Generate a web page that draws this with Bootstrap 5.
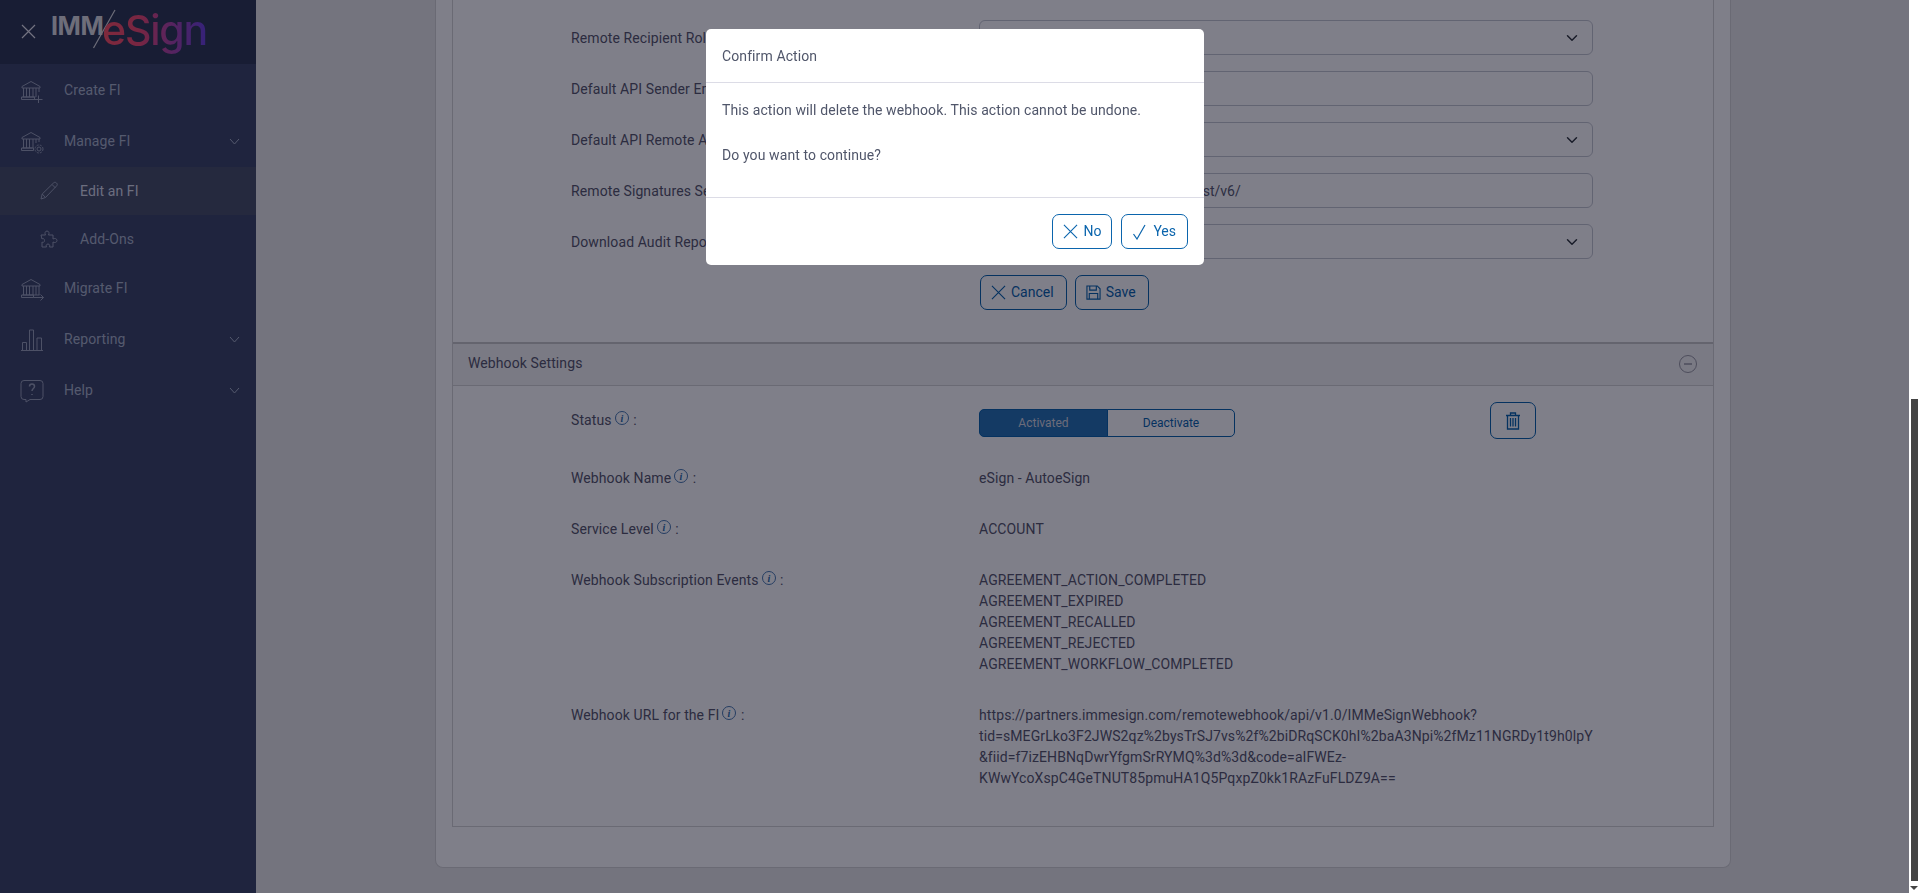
<!DOCTYPE html>
<html lang="en">
<head>
    <meta charset="UTF-8">
    <meta name="viewport" content="width=device-width, initial-scale=1.0">
    <title>Edit an FI - IMM eSign</title>
    <link href="https://cdn.jsdelivr.net/npm/bootstrap@5.3.0/dist/css/bootstrap.min.css" rel="stylesheet">
    <style>
        html, body { height: 100%; overflow: hidden; }
        body { font-family: Roboto, "Liberation Sans", sans-serif; font-size: 14px; letter-spacing: .1px; color: #5a5c70; background: #e8e8e8; }

        .app-shell { height: 893px; }
        .side-panel { width: 256px; flex: 0 0 256px; background: #3e4868; color: #aab4c8; }
        .side-top { height: 64px; background: #303a54; padding-left: 21px; }
        .side-close { width: 15px; height: 15px; margin-right: 15px; margin-top: -2px; }
        .brand-box { position: relative; width: 170px; height: 64px; }
        .brand-imm { position: absolute; left: 0; top: 10px; font: 700 25px/32px Inter, sans-serif; color: #dcdce0; letter-spacing: -.4px; }
        .brand-esign { position: absolute; left: 51px; top: 3px; font: 500 41px/54px Inter, sans-serif; letter-spacing: -1.2px;
            background: linear-gradient(90deg, #ff5464 0%, #f04c70 35%, #b048a8 65%, #6a44e0 100%);
            -webkit-background-clip: text; background-clip: text; color: transparent; }
        .brand-slash { position: absolute; left: 41px; top: 9px; }
        .side-link { display: flex; align-items: center; color: #aab4c8; text-decoration: none; }
        .side-link svg.ico { fill: none; stroke: #9aa2b8; stroke-width: 1; flex: none; }
        .side-main { height: 51px; padding-left: 20px; }
        .side-main .ico { width: 24px; height: 24px; margin-right: 20px; }
        .side-sub { height: 48px; padding-left: 39px; }
        .side-sub .ico { width: 20px; height: 20px; margin-right: 21px; }
        .side-sub.is-active { background: #4a5268; color: #d8dce8; }
        .side-chev { margin-left: auto; margin-right: 16px; width: 11px; height: 7px; fill: none; stroke: currentColor; stroke-width: 1; }
        .first-link { margin-top: 1px; }

        .work-area { min-width: 0; padding: 0 0 0 179px; }
        .outer-card { width: 1296px; height: 868px; background: #fff; border: 1px solid #d4d4d4; border-top: 0; border-radius: 0 0 8px 8px; padding: 0 16px; }
        .inner-panel { height: 827px; border: 1px solid #d4d4d4; border-top: 0; background: #fff; }
        .form-area { height: 342px; padding: 20px 0 0 118px; }
        .field-row { height: 51px; }
        .field-label { width: 408px; flex: none; line-height: 21px; padding-top: 8px; color: #58586c; }
        .field-box { width: 614px; }
        .field-box .form-control, .field-box .form-select { height: 35px; font-size: 14px; color: #5a5c70; border-color: #c4c8d0; border-radius: 6px; padding-top: 0; padding-bottom: 0; }
        .field-box .form-control { padding-left: 16px; }
        .blue-btn { --bs-btn-color: #0b65ad; --bs-btn-border-color: #0b65ad; --bs-btn-hover-bg: #0b65ad; --bs-btn-hover-border-color: #0b65ad;
            height: 35px; font-size: 14px; border-radius: 7px; padding: 0 12px 0 10px; display: inline-flex; align-items: center; gap: 5px; }
        .blue-btn svg { fill: none; stroke: currentColor; flex: none; }
        .btn-pair { margin-left: 409px; }
        .hook-head { height: 44px; border-top: 2px solid #c8c8c8; border-bottom: 1px solid #d4d4d4; background: #f4f4f4; padding: 0 16px 2px 15px; color: #58586c; }
        .hook-minus { width: 18px; height: 18px; fill: none; stroke: #9a9aa4; }
        .hook-body { padding: 0 0 0 118px; }
        .hook-row { display: flex; line-height: 21px; height: 51px; }
        .hook-row .hook-label { width: 408px; flex: none; color: #58586c; }
        .hook-row .hook-value { color: #58586c; }
        .hook-status { padding-top: 24px; height: 82px; }
        .hook-status .hook-value { margin-top: -1px; }
        .hook-events { height: 135px; }
        .info-dot { width: 14px; height: 14px; display: inline-block; vertical-align: 0; margin: 0 1px 0 3px; }
        .status-toggle { width: 256px; height: 28px; }
        .status-toggle .btn { font-size: 12px; line-height: 26px; padding: 0; border-color: #0b65ad; color: #0b65ad; border-radius: 5px; }
        .status-toggle .btn.toggle-on { background: #2874b4; color: #d8d8e0; width: 129px; flex: none; }
        .trash-btn { width: 46px; height: 37px; margin-left: 255px; margin-top: -7px; justify-content: center; padding: 0; }

        .fake-scroll { position: fixed; z-index: 1060; top: 0; right: 0; bottom: 0; width: 11px; background: #fff; }
        .fake-thumb { position: absolute; top: 399px; bottom: 12px; left: 2px; width: 7px; background: #444; }
        .fake-arrow { position: absolute; left: 1px; bottom: 3px; width: 0; height: 0; border: 4px solid transparent; border-top: 4px solid #444; border-bottom: 0; }

        .modal-backdrop.dim-layer { background: rgb(0, 0, 20); opacity: .5; }
        .confirm-dialog { max-width: 498px; width: 498px; margin: 29px 0 0 706px; }
        .confirm-dialog .modal-content { border: 0; border-radius: 5px; color: #50566a; height: 236px; }
        .confirm-dialog .modal-header { height: 54px; padding: 2px 16px 0; border-bottom: 1px solid #dcdce6; font-size: 14px; }
        .confirm-dialog .modal-body { height: 114px; flex: none; padding: 17px 16px 0; line-height: 21px; }
        .confirm-dialog .modal-body p { margin-bottom: 24px; }
        .confirm-dialog .modal-footer { height: 68px; padding: 0 16px 0 0; border-top: 1px solid #dcdce6; gap: 9px; align-items: center; }
        .confirm-dialog .modal-footer > * { margin: 0; }
        .confirm-dialog .modal-footer .btn-no { padding-right: 10px; }
        .confirm-dialog .modal-footer .btn-yes { padding: 0 11px; gap: 7px; }
    </style>
</head>
<body>
    <div class="app-shell d-flex">
        <aside class="side-panel">
            <div class="side-top d-flex align-items-center">
                <svg class="side-close" viewBox="0 0 15 15" fill="none" stroke="#e6e6ee" stroke-width="1.2"><path d="M1 1l13 13M14 1L1 14"/></svg>
                <div class="brand-box">
                    <span class="brand-imm">IMM</span>
                    <svg class="brand-slash" width="24" height="40" viewBox="0 0 24 40" fill="none" stroke="#dcdce0" stroke-width="1.2"><path d="M1.5 39L23 1"/></svg>
                    <span class="brand-esign">eSign</span>
                </div>
            </div>

            <a class="side-link side-main first-link" href="#">
                <svg class="ico" viewBox="0 0 24 24"><path d="M2 7.500L11 2.500l9 5v1.500H2zM3.500 9v9M6.500 9v9M9.500 9v9M13 9v9M16 9v9M19 9v4M2.500 18h13M1.500 20.500h13v-2.500h-13zM14 20.500h8.500M18.500 16.500v8"/></svg>
                <span>Create FI</span>
            </a>
            <a class="side-link side-main" href="#">
                <svg class="ico" viewBox="0 0 24 24"><path d="M2 7.500L11 2.500l9 5v1.500H2zM3.500 9v9M6.500 9v9M9.500 9v9M13 9v9M16 9v4M19 9v3M2.500 18h10M1.500 20.500h12v-2.500h-12z"/><circle cx="19" cy="19" r="2"/><circle cx="19" cy="19" r="4" stroke-dasharray="2 1.200"/></svg>
                <span>Manage FI</span>
                <svg class="side-chev" viewBox="0 0 11 7"><path d="M1 1l4.500 5L10 1"/></svg>
            </a>
            <a class="side-link side-sub is-active" href="#">
                <svg class="ico" viewBox="0 0 20 20"><path d="M2 18l1.200-5L14.500 2c1-1 2-1 3 0s1 2 0 3L6.500 16.500zM3.200 13l3.300 3.500M13 3.500l3.500 3.500"/></svg>
                <span>Edit an FI</span>
            </a>
            <a class="side-link side-sub" href="#">
                <svg class="ico" viewBox="0 0 20 20"><path d="M2 6h4.500c-1-1.500-.5-4 1.500-4s2.500 2.500 1.500 4H14v4c1.500-1 4-.5 4 1.500S15.500 14 14 13v5h-3.500c.8-1.500 0-3-1.500-3s-2.500 1.500-1.500 3H3v-5c1 .8 2.500.3 2.500-1.500S4 9 3 10z"/></svg>
                <span>Add-Ons</span>
            </a>
            <a class="side-link side-main" href="#">
                <svg class="ico" viewBox="0 0 24 24"><path d="M2 7.500L11 2.500l9 5v1.500H2zM3.500 9v9M6.500 9v9M9.500 9v9M13 9v9M16 9v9M19 9v9M2.500 18h17M1.500 20.500h12v-2.500h-12zM13.500 20.500h10M20.500 17.500l3 3-3 3"/></svg>
                <span>Migrate FI</span>
            </a>
            <a class="side-link side-main" href="#">
                <svg class="ico" viewBox="0 0 24 24"><path d="M1 22.500h22M2.500 22.500v-8h4v8M9.500 22.500V2h4v20.500M17 22.500V10h4.500v12.500"/></svg>
                <span>Reporting</span>
                <svg class="side-chev" viewBox="0 0 11 7"><path d="M1 1l4.500 5L10 1"/></svg>
            </a>
            <a class="side-link side-main" href="#">
                <svg class="ico" viewBox="0 0 24 24"><path d="M4 1.500h16a3 3 0 0 1 3 3v13a3 3 0 0 1-3 3H10l-4 2.500v-2.500H4a3 3 0 0 1-3-3v-13a3 3 0 0 1 3-3z"/><path d="M9.500 7.500c0-3.200 5-3.200 5 0 0 2-2.500 2-2.500 4.500M12 15v1" stroke-width="1.500"/></svg>
                <span>Help</span>
                <svg class="side-chev" viewBox="0 0 11 7"><path d="M1 1l4.500 5L10 1"/></svg>
            </a>
        </aside>

        <main class="work-area flex-grow-1">
            <div class="outer-card">
                <div class="inner-panel">
                    <form class="form-area">
                        <div class="field-row d-flex">
                            <label class="field-label">Remote Recipient Role :</label>
                            <div class="field-box"><select class="form-select"><option></option></select></div>
                        </div>
                        <div class="field-row d-flex">
                            <label class="field-label">Default API Sender Email :</label>
                            <div class="field-box"><input class="form-control" type="text" value=""></div>
                        </div>
                        <div class="field-row d-flex">
                            <label class="field-label">Default API Remote Account :</label>
                            <div class="field-box"><select class="form-select"><option></option></select></div>
                        </div>
                        <div class="field-row d-flex">
                            <label class="field-label">Remote Signatures Service URL :</label>
                            <div class="field-box"><input class="form-control" type="text" value="https://api.adobesign.com/api/rest/v6/"></div>
                        </div>
                        <div class="field-row d-flex">
                            <label class="field-label">Download Audit Report :</label>
                            <div class="field-box"><select class="form-select"><option></option></select></div>
                        </div>
                        <div class="btn-pair d-flex gap-2">
                            <button type="button" class="btn blue-btn">
                                <svg width="15" height="15" viewBox="0 0 16 16" stroke-width="1.200"><path d="M1 1l14 14M15 1L1 15"/></svg>Cancel
                            </button>
                            <button type="button" class="btn blue-btn">
                                <svg width="15" height="15" viewBox="0 0 16 16" stroke-width="1.200"><path d="M1 1h11l3 3v11H1zM4 1v4.500h7V1M3.500 15V9h9v6"/></svg>Save
                            </button>
                        </div>
                    </form>

                    <div class="hook-head d-flex align-items-center justify-content-between">
                        <span>Webhook Settings</span>
                        <svg class="hook-minus" viewBox="0 0 18 18"><circle cx="9" cy="9" r="8.500"/><path d="M5 9h8" stroke-width="1.500"/></svg>
                    </div>

                    <div class="hook-body">
                        <div class="hook-row hook-status">
                            <div class="hook-label">Status<svg class="info-dot" viewBox="0 0 14 14"><circle cx="7" cy="7" r="6.500" fill="none" stroke="#4a7ab0"/><text x="7" y="10.500" text-anchor="middle" font-family="Liberation Serif, serif" font-style="italic" font-weight="700" font-size="10" fill="#2f6ea8">i</text></svg> :</div>
                            <div class="hook-value d-flex align-items-start">
                                <div class="btn-group status-toggle">
                                    <button type="button" class="btn toggle-on">Activated</button>
                                    <button type="button" class="btn">Deactivate</button>
                                </div>
                                <button type="button" class="btn blue-btn trash-btn" aria-label="Delete">
                                    <svg width="14" height="18" viewBox="0 0 14 18" stroke-width="1.300"><path d="M0 3.500h14M4.500 3.500V1h5v2.500M1.500 3.500V17h11V3.500M4.500 6v8.500M7 6v8.500M9.500 6v8.500"/></svg>
                                </button>
                            </div>
                        </div>
                        <div class="hook-row">
                            <div class="hook-label">Webhook Name<svg class="info-dot" viewBox="0 0 14 14"><circle cx="7" cy="7" r="6.500" fill="none" stroke="#4a7ab0"/><text x="7" y="10.500" text-anchor="middle" font-family="Liberation Serif, serif" font-style="italic" font-weight="700" font-size="10" fill="#2f6ea8">i</text></svg> :</div>
                            <div class="hook-value">eSign - AutoeSign</div>
                        </div>
                        <div class="hook-row">
                            <div class="hook-label">Service Level<svg class="info-dot" viewBox="0 0 14 14"><circle cx="7" cy="7" r="6.500" fill="none" stroke="#4a7ab0"/><text x="7" y="10.500" text-anchor="middle" font-family="Liberation Serif, serif" font-style="italic" font-weight="700" font-size="10" fill="#2f6ea8">i</text></svg> :</div>
                            <div class="hook-value">ACCOUNT</div>
                        </div>
                        <div class="hook-row hook-events">
                            <div class="hook-label">Webhook Subscription Events<svg class="info-dot" viewBox="0 0 14 14"><circle cx="7" cy="7" r="6.500" fill="none" stroke="#4a7ab0"/><text x="7" y="10.500" text-anchor="middle" font-family="Liberation Serif, serif" font-style="italic" font-weight="700" font-size="10" fill="#2f6ea8">i</text></svg> :</div>
                            <div class="hook-value">AGREEMENT_ACTION_COMPLETED<br>AGREEMENT_EXPIRED<br>AGREEMENT_RECALLED<br>AGREEMENT_REJECTED<br>AGREEMENT_WORKFLOW_COMPLETED</div>
                        </div>
                        <div class="hook-row">
                            <div class="hook-label">Webhook URL for the FI<svg class="info-dot" viewBox="0 0 14 14"><circle cx="7" cy="7" r="6.500" fill="none" stroke="#4a7ab0"/><text x="7" y="10.500" text-anchor="middle" font-family="Liberation Serif, serif" font-style="italic" font-weight="700" font-size="10" fill="#2f6ea8">i</text></svg> :</div>
                            <div class="hook-value">https://partners.immesign.com/remotewebhook/api/v1.0/IMMeSignWebhook?<br>tid=sMEGrLko3F2JWS2qz%2bysTrSJ7vs%2f%2biDRqSCK0hI%2baA3Npi%2fMz11NGRDy1t9h0lpY<br>&amp;fiid=f7izEHBNqDwrYfgmSrRYMQ%3d%3d&amp;code=aIFWEz-<br>KWwYcoXspC4GeTNUT85pmuHA1Q5PqxpZ0kk1RAzFuFLDZ9A==</div>
                        </div>
                    </div>
                </div>
            </div>
        </main>
    </div>

    <div class="modal-backdrop dim-layer"></div>
    <div class="modal d-block" tabindex="-1">
        <div class="modal-dialog confirm-dialog">
            <div class="modal-content">
                <div class="modal-header">Confirm Action</div>
                <div class="modal-body">
                    <p>This action will delete the webhook. This action cannot be undone.</p>
                    <p>Do you want to continue?</p>
                </div>
                <div class="modal-footer">
                    <button type="button" class="btn blue-btn btn-no">
                        <svg width="15" height="15" viewBox="0 0 16 16" stroke-width="1.200"><path d="M1 1l14 14M15 1L1 15"/></svg>No
                    </button>
                    <button type="button" class="btn blue-btn btn-yes">
                        <svg width="13" height="16" viewBox="0 0 13 16" stroke-width="1.200"><path d="M.5 10l3.500 5L12 1"/></svg>Yes
                    </button>
                </div>
            </div>
        </div>
    </div>

    <div class="fake-scroll"><div class="fake-thumb"></div><div class="fake-arrow"></div></div>

    <script src="https://cdn.jsdelivr.net/npm/bootstrap@5.3.0/dist/js/bootstrap.bundle.min.js"></script>
</body>
</html>
